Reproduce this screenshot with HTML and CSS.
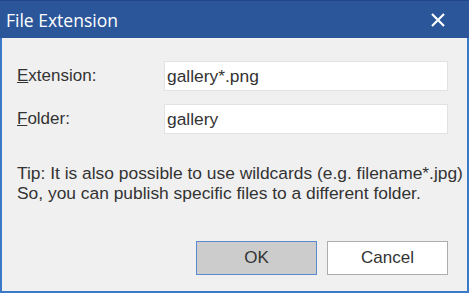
FILE: index.html
```html
<!DOCTYPE html>
<html lang="en">
<head>
    <meta charset="UTF-8">
    <title>File Extension</title>
    <link rel="stylesheet" href="styles.css">
</head>
<body>
    <div class="window">
        <div class="titlebar">
            <span class="title">File Extension</span>
            <svg class="close" width="14" height="14" viewBox="0 0 14 14">
                <path d="M1 1 L13 13 M13 1 L1 13" stroke="#fff" stroke-width="2.2" fill="none"/>
            </svg>
        </div>
        <div class="content">
            <div class="form">
                <label><u>E</u>xtension:</label>
                <div class="field">gallery*.png</div>
                <label><u>F</u>older:</label>
                <div class="field">gallery</div>
            </div>
            <p class="tip">Tip: It is also possible to use wildcards (e.g. filename*.jpg)<br>So, you can publish specific files to a different folder.</p>
            <div class="buttons">
                <button class="btn default">OK</button>
                <button class="btn">Cancel</button>
            </div>
        </div>
    </div>
</body>
</html>
```

FILE: styles.css
```css
body {
    margin: 0;
    font-family: "Liberation Sans", Arial, sans-serif;
    color: #333;
}

.window {
    width: 469px;
    height: 293px;
    box-sizing: border-box;
    border: 2px solid #3c78c8;
    border-top: none;
    background-color: #f0f0f0;
    display: flex;
    flex-direction: column;
}

.titlebar {
    height: 38px;
    margin: 0 -2px;
    background-color: #2b579a;
    border-top: 1px solid #22488a;
    box-sizing: border-box;
    display: flex;
    align-items: center;
    justify-content: space-between;
    padding: 0 24px 0 6px;
}

.title {
    font-family: "Open Sans", sans-serif;
    font-size: 17.5px;
    color: #fff;
}

.close {
    display: block;
}

.content {
    flex: 1;
    padding: 23px 19px 0 15px;
    display: flex;
    flex-direction: column;
}

.form {
    display: grid;
    grid-template-columns: 147px 1fr;
    row-gap: 13px;
    align-items: center;
}

.form label {
    font-size: 17px;
    color: #333;
}

.field {
    height: 30px;
    box-sizing: border-box;
    background-color: #fff;
    border: 1px solid #e2e2e2;
    padding: 0 2px;
    font-size: 17.4px;
    line-height: 29px;
    color: #333;
}

.tip {
    margin: 30px 0 0;
    font-size: 17.4px;
    line-height: 19.5px;
    color: #333;
    white-space: nowrap;
}

.buttons {
    display: flex;
    justify-content: flex-end;
    gap: 10px;
    margin-top: 38px;
}

.btn {
    width: 121px;
    height: 34px;
    font-family: "Liberation Sans", Arial, sans-serif;
    font-size: 17px;
    color: #333;
    background-color: #fff;
    border: 1px solid #adadad;
    padding: 0;
}

.btn.default {
    background-color: #cccccc;
    border-color: #5a8ad0;
}
```
